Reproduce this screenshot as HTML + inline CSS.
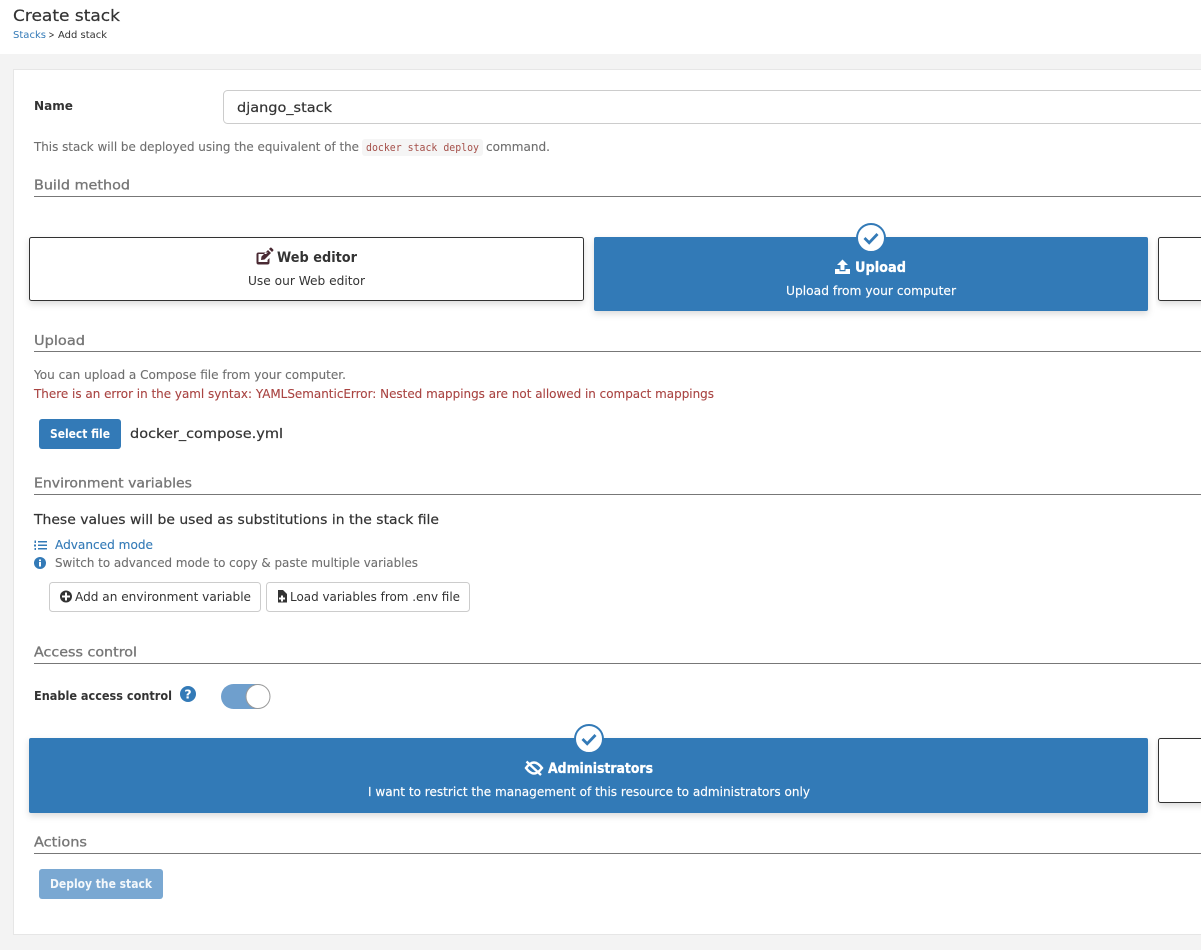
<!DOCTYPE html>
<html><head><meta charset="utf-8"><title>Create stack</title>
<style>
html,body{margin:0;padding:0;background:#f3f3f3;width:1201px;height:950px;overflow:hidden}
svg{display:block;position:absolute;left:0;top:0}
text{font-family:"DejaVu Sans","Liberation Sans",sans-serif;font-size:12px;fill:#6f6f6f;white-space:pre}
.h{font-size:13px;fill:#767676;stroke:#767676;stroke-width:.3px}
.b{font-weight:bold;fill:#333}
.w{fill:#fff;stroke:#fff;stroke-width:.15px}
.d{fill:#333}
.t{fill:#333;stroke:#333;stroke-width:.2px}
.g{stroke:#6f6f6f;stroke-width:.12px}
</style></head><body>
<svg width="1201" height="950" viewBox="0 0 1201 950" xmlns="http://www.w3.org/2000/svg">
<defs>
<filter id="s" x="-5%" y="-20%" width="110%" height="150%"><feDropShadow dx="0" dy="3" stdDeviation="3.5" flood-color="#000" flood-opacity=".14"/></filter>
</defs>
<rect x="0" y="0" width="1201" height="54" fill="#fff"/>
<rect x="13.5" y="69.5" width="1220" height="865" fill="#fff" stroke="#e6e6e6"/>

<text class="t" x="13" y="21" textLength="107" lengthAdjust="spacingAndGlyphs" style="font-size:16px">Create stack</text>
<text x="13" y="38" textLength="33" lengthAdjust="spacingAndGlyphs" style="font-size:10px;fill:#337ab7">Stacks</text>
<text x="48.500" y="38" textLength="6" lengthAdjust="spacingAndGlyphs" style="font-size:10px;fill:#333">&gt;</text>
<text x="58" y="38" textLength="49" lengthAdjust="spacingAndGlyphs" style="font-size:10px;fill:#333">Add stack</text>

<text class="b" x="34" y="110" textLength="39" lengthAdjust="spacingAndGlyphs">Name</text>
<rect x="223.5" y="90.5" width="1000" height="33" rx="4" fill="#fff" stroke="#ccc"/>
<text class="t" x="237" y="112" textLength="95" lengthAdjust="spacingAndGlyphs" style="font-size:13.5px">django_stack</text>

<text class="g" x="34" y="151" textLength="325" lengthAdjust="spacingAndGlyphs">This stack will be deployed using the equivalent of the</text>
<rect x="362" y="139" width="121" height="17" rx="3" fill="#f5f5f5"/>
<text x="366" y="151" textLength="113" lengthAdjust="spacingAndGlyphs" style="font-family:'DejaVu Sans Mono','Liberation Mono',monospace;font-size:10.5px;fill:#a5504a">docker stack deploy</text>
<text class="g" x="486" y="151" textLength="64" lengthAdjust="spacingAndGlyphs">command.</text>

<text class="h" x="34" y="189.500" textLength="96" lengthAdjust="spacingAndGlyphs">Build method</text>
<rect x="34" y="196" width="1167" height="1" fill="#777"/>

<!-- Build method cards -->
<rect x="29.5" y="237.5" width="554" height="63" rx="2" fill="#fff" stroke="#333" filter="url(#s)"/>
<g transform="translate(0 1)"><path d="M268 252h-9.500a2 2 0 0 0-2 2v8a2 2 0 0 0 2 2h9a2 2 0 0 0 2-2v-4.500l-2 2v2h-9v-8h7.500z M261.500 256l6.500-6.500 3 3-6.500 6.500-3.500.5z M269 248.500l1.200-1.200a1 1 0 0 1 1.300 0l1.700 1.700a1 1 0 0 1 0 1.300L272 251.500z" fill="#4a2a33" transform="translate(0 -.5)"/></g>
<text class="b" x="277" y="262" textLength="80" lengthAdjust="spacingAndGlyphs" style="font-size:14px">Web editor</text>
<text class="d" x="248" y="285" textLength="117" lengthAdjust="spacingAndGlyphs">Use our Web editor</text>

<rect x="594" y="237" width="554" height="74" rx="2" fill="#337ab7" filter="url(#s)"/>
<circle cx="871" cy="238" r="14" fill="#fff" stroke="#337ab7" stroke-width="2"/>
<path d="M864.500 238l4.700 4.700 8.300-8.700" fill="none" stroke="#337ab7" stroke-width="2.800"/>
<path d="M842.500 259.500l5.500 5.500h-3.500v5h-4v-5H837z M835 269h4.500v2.200h6V269h4.500v5h-15z" fill="#fff"/>
<text class="b" x="855" y="272" textLength="51" lengthAdjust="spacingAndGlyphs" style="font-size:14px;fill:#fff;stroke:#fff;stroke-width:.3px">Upload</text>
<text class="w" x="786" y="295" textLength="170" lengthAdjust="spacingAndGlyphs">Upload from your computer</text>

<rect x="1158.500" y="237.500" width="60" height="63" rx="2" fill="#fff" stroke="#333" filter="url(#s)"/>

<text class="h" x="34" y="345" textLength="51" lengthAdjust="spacingAndGlyphs">Upload</text>
<rect x="34" y="351" width="1167" height="1" fill="#777"/>
<text class="g" x="34" y="379" textLength="312" lengthAdjust="spacingAndGlyphs">You can upload a Compose file from your computer.</text>
<text x="34" y="398" textLength="680" lengthAdjust="spacingAndGlyphs" style="fill:#a94442;stroke:#a94442;stroke-width:.12px">There is an error in the yaml syntax: YAMLSemanticError: Nested mappings are not allowed in compact mappings</text>
<rect x="39" y="419" width="82" height="30" rx="3" fill="#337ab7"/>
<text x="50" y="438" textLength="60" lengthAdjust="spacingAndGlyphs" style="font-weight:bold;fill:#fff">Select file</text>
<text class="t" x="130" y="438" textLength="153" lengthAdjust="spacingAndGlyphs" style="font-size:13.500px">docker_compose.yml</text>

<text class="h" x="34" y="487.500" textLength="158" lengthAdjust="spacingAndGlyphs">Environment variables</text>
<rect x="34" y="494" width="1167" height="1" fill="#777"/>
<text class="t" x="34" y="524" textLength="405" lengthAdjust="spacingAndGlyphs" style="font-size:13px">These values will be used as substitutions in the stack file</text>

<path d="M38 541h9v1.500h-9z M38 544.500h9v1.500h-9z M38 548h9v1.500h-9z" fill="#337ab7"/>
<path d="M34.500 540.500h1.500v2.500h-1.500z M34 544.500h2v2h-2z M34.500 548h1.500v2h-1.500z" fill="#337ab7"/>
<text x="55" y="549" textLength="98" lengthAdjust="spacingAndGlyphs" style="fill:#337ab7;stroke:#337ab7;stroke-width:.12px">Advanced mode</text>
<circle cx="40" cy="563" r="6" fill="#337ab7"/>
<rect x="39" y="562" width="2" height="4.500" fill="#fff"/><rect x="39" y="559.500" width="2" height="1.700" fill="#fff"/>
<text class="g" x="55" y="567" textLength="363" lengthAdjust="spacingAndGlyphs">Switch to advanced mode to copy &amp; paste multiple variables</text>

<rect x="49.500" y="582.500" width="211" height="29" rx="3" fill="#fff" stroke="#ccc"/>
<circle cx="66" cy="596.500" r="6" fill="#333"/>
<path d="M65 592.500h2v3h3v2h-3v3h-2v-3h-3v-2h3z" fill="#fff"/>
<text class="d" x="75" y="601" textLength="176" lengthAdjust="spacingAndGlyphs">Add an environment variable</text>
<rect x="266.500" y="582.500" width="203" height="29" rx="3" fill="#fff" stroke="#ccc"/>
<path d="M278 590h5l4 4v8.500h-9z" fill="#333"/>
<path d="M281 595.500h2v2h2v2h-2v2h-2v-2h-2v-2h2z" fill="#fff"/>
<text class="d" x="290" y="601" textLength="170" lengthAdjust="spacingAndGlyphs">Load variables from .env file</text>

<text class="h" x="34" y="656.500" textLength="103" lengthAdjust="spacingAndGlyphs">Access control</text>
<rect x="34" y="663" width="1167" height="1" fill="#777"/>
<text class="b" x="34" y="700" textLength="138" lengthAdjust="spacingAndGlyphs">Enable access control</text>
<circle cx="188" cy="694" r="8" fill="#337ab7"/>
<text x="188" y="698.500" text-anchor="middle" style="font-size:12.500px;font-weight:bold;fill:#fff">?</text>
<rect x="221" y="684" width="49" height="25" rx="12.500" fill="#6f9fcd"/>
<circle cx="258" cy="696.500" r="12" fill="#fff" stroke="#9a9a9a"/>

<!-- Access cards -->
<rect x="29" y="738" width="1119" height="75" rx="2" fill="#337ab7" filter="url(#s)"/>
<circle cx="589" cy="739" r="14" fill="#fff" stroke="#337ab7" stroke-width="2"/>
<path d="M582.500 739l4.700 4.700 8.300-8.700" fill="none" stroke="#337ab7" stroke-width="2.800"/>
<path d="M526 768c3-4 5.500-5.500 8-5.500s5 1.500 8 5.500c-3 4-5.500 5.500-8 5.500s-5-1.500-8-5.500z" fill="none" stroke="#fff" stroke-width="2.400"/>
<path d="M526.500 761.500l14.500 13.500" fill="none" stroke="#fff" stroke-width="2.400"/>
<text class="b" x="548" y="773" textLength="105" lengthAdjust="spacingAndGlyphs" style="font-size:14px;fill:#fff;stroke:#fff;stroke-width:.3px">Administrators</text>
<text class="w" x="368" y="796" textLength="442" lengthAdjust="spacingAndGlyphs">I want to restrict the management of this resource to administrators only</text>
<rect x="1158.500" y="738.500" width="60" height="64" rx="2" fill="#fff" stroke="#333" filter="url(#s)"/>

<text class="h" x="34" y="846.500" textLength="53" lengthAdjust="spacingAndGlyphs">Actions</text>
<rect x="34" y="853" width="1167" height="1" fill="#777"/>
<rect x="39" y="869" width="124" height="30" rx="3" fill="#7aa8d2"/>
<text x="50" y="888" textLength="102" lengthAdjust="spacingAndGlyphs" style="font-weight:bold;fill:#f4f8fb">Deploy the stack</text>
</svg>
</body></html>
